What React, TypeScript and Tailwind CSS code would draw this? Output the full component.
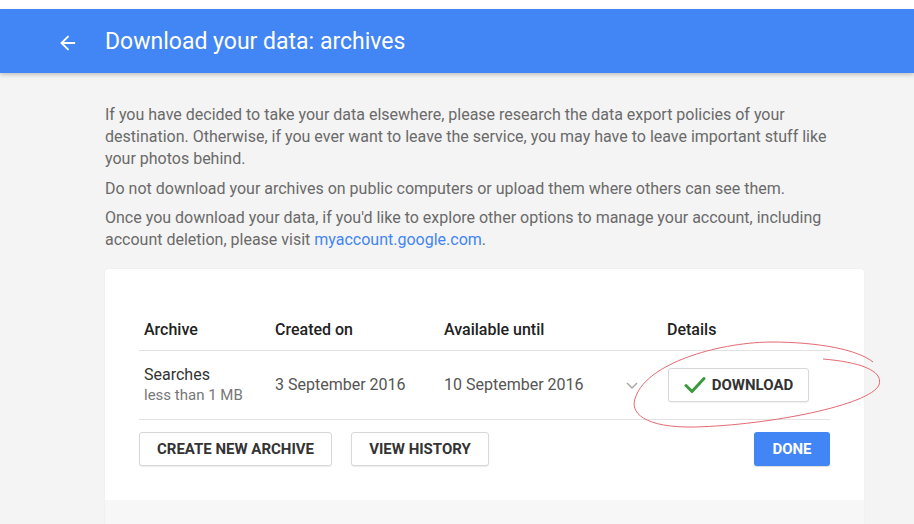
import React from "react";

function Check() {
  return (
    <svg width="22" height="18" viewBox="0 0 22 18" className="mr-[6px]">
      <path d="M2 9.5 L8 15.5 L20 2.5" fill="none" stroke="#3c9a3c" strokeWidth="3" strokeLinecap="round" strokeLinejoin="round" />
    </svg>
  );
}

export default function App() {
  return (
    <div className="relative w-[914px] h-[524px] overflow-hidden bg-[#f4f4f4]" style={{ fontFamily: "Roboto, 'Liberation Sans', sans-serif" }}>
      <div className="h-[9px] bg-white" />
      <header className="h-[64px] bg-[#4285f4] flex items-center pt-[3px] shadow-[0_2px_4px_rgba(0,0,0,0.2)] relative z-10">
        <svg width="22" height="22" viewBox="0 0 24 24" className="ml-[57px]" fill="none" stroke="white" strokeWidth="2" strokeLinecap="round" strokeLinejoin="round">
          <path d="M19 12H5" />
          <path d="M12 19l-7-7 7-7" />
        </svg>
        <h1 className="ml-[26px] text-white text-[23px]">Download your data: archives</h1>
      </header>

      <div className="ml-[105px] w-[759px] pt-[31px]">
        <div className="text-[16px] leading-[22px] text-[#6a6a6a] pr-[20px]">
          <p>If you have decided to take your data elsewhere, please research the data export policies of your destination. Otherwise, if you ever want to leave the service, you may have to leave important stuff like your photos behind.</p>
          <p className="mt-[8px]">Do not download your archives on public computers or upload them where others can see them.</p>
          <p className="mt-[7px]">
            Once you download your data, if you'd like to explore other options to manage your account, including account deletion, please visit{" "}
            <span className="text-[#4285f4]">myaccount.google.com</span>.
          </p>
        </div>

        <div className="mt-[18px] bg-white rounded-[3px] shadow-[0_0_1px_rgba(0,0,0,0.12)]">
          <div className="pt-[40px] pb-[34px] pl-[34px] pr-[34px]">
            <div className="grid grid-cols-[131px_169px_223px_168px] items-center h-[42px] border-b border-[#e2e2e2] text-[16px] font-medium text-[#222]">
              <div className="pl-[5px]">Archive</div>
              <div className="pl-[5px]">Created on</div>
              <div className="pl-[5px]">Available until</div>
              <div className="pl-[5px]">Details</div>
            </div>
            <div className="grid grid-cols-[131px_169px_223px_168px] items-center h-[69px] border-b border-[#e2e2e2] text-[16px] text-[#555]">
              <div className="pl-[5px] leading-[21px]">
                <div className="text-[#333]">Searches</div>
                <div className="text-[15px] text-[#777]">less than 1 MB</div>
              </div>
              <div className="pl-[5px]">3 September 2016</div>
              <div className="pl-[5px] flex items-center justify-between pr-[23px]">
                <span>10 September 2016</span>
                <svg width="14" height="10" viewBox="0 0 14 10" fill="none" stroke="#aaa" strokeWidth="1.5">
                  <path d="M2 3 L7 8 L12 3" />
                </svg>
              </div>
              <div className="pl-[6px] flex items-center">
                <button className="shrink-0 flex items-center justify-center w-[141px] h-[34px] border border-[#d8d8d8] rounded-[3px] bg-white text-[15px] font-bold text-[#333] shadow-[0_1px_1px_rgba(0,0,0,0.06)]">
                  <Check />
                  DOWNLOAD
                </button>
                <span className="ml-[24px] w-[2px] h-[2px] bg-[#ddd] rounded-full" />
              </div>
            </div>
            <div className="flex items-center mt-[12px]">
              <button className="w-[193px] h-[34px] border border-[#d8d8d8] rounded-[3px] bg-white text-[15px] font-bold text-[#333] shadow-[0_1px_1px_rgba(0,0,0,0.08)]">CREATE NEW ARCHIVE</button>
              <button className="ml-[19px] w-[138px] h-[34px] border border-[#d8d8d8] rounded-[3px] bg-white text-[15px] font-bold text-[#333] shadow-[0_1px_1px_rgba(0,0,0,0.08)]">VIEW HISTORY</button>
              <button className="ml-auto w-[76px] h-[34px] rounded-[3px] bg-[#4285f4] text-[15px] font-bold text-white shadow-[0_1px_1px_rgba(0,0,0,0.15)]">DONE</button>
            </div>
          </div>
          <div className="h-[40px] bg-[#f7f7f7]" />
        </div>
      </div>

      <svg className="absolute left-0 top-0 pointer-events-none" width="914" height="524" viewBox="0 0 914 524" fill="none">
        <path d="M823 359 C858 362 884 370 879 385 C870 405 770 425 695 427 C645 428 628 413 636 396 C648 364 715 343 770 342 C820 342 858 350 873 362" stroke="#e46a72" strokeWidth="1" />
      </svg>
    </div>
  );
}
